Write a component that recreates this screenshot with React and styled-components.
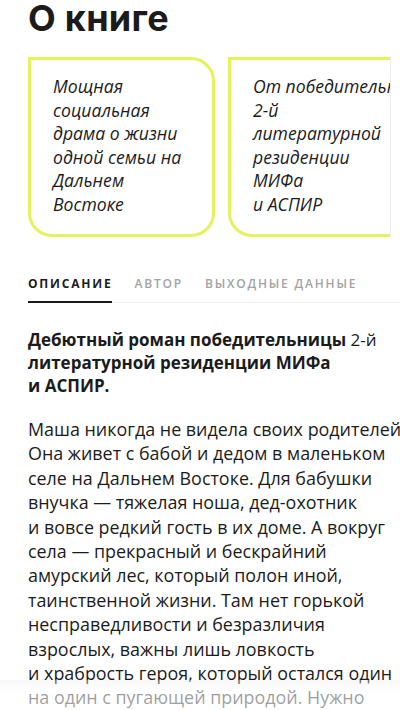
import React from "react";
import styled, { createGlobalStyle } from "styled-components";

const GlobalStyle = createGlobalStyle`
  html, body {
    margin: 0;
    padding: 0;
    background: #fff;
    overflow: hidden;
  }
  body {
    font-family: "Open Sans", "Noto Sans", sans-serif;
    color: #1b1b1b;
  }
`;

const cards = [
  ["Мощная", "социальная", "драма о жизни", "одной семьи на", "Дальнем", "Востоке"],
  ["От победительницы", "2-й", "литературной", "резиденции", "МИФа", "и АСПИР"],
];

const tabs = ["Описание", "Автор", "Выходные данные"];

const bodyLines = [
  "Маша никогда не видела своих родителей.",
  "Она живет с бабой и дедом в маленьком",
  "селе на Дальнем Востоке. Для бабушки",
  "внучка — тяжелая ноша, дед-охотник",
  "и вовсе редкий гость в их доме. А вокруг",
  "села — прекрасный и бескрайний",
  "амурский лес, который полон иной,",
  "таинственной жизни. Там нет горькой",
  "несправедливости и безразличия",
  "взрослых, важны лишь ловкость",
  "и храбрость героя, который остался один",
  "на один с пугающей природой. Нужно",
];

const Page = styled.div`
  position: relative;
  width: 400px;
  height: 710px;
  overflow: hidden;
  padding: 1px 0 0 28px;
  box-sizing: border-box;
`;

const Title = styled.h1`
  margin: -5px 0 0;
  font-family: "Inter", sans-serif;
  font-size: 36px;
  font-weight: 700;
  line-height: 44px;
  letter-spacing: 0.3px;
`;

const CardRow = styled.div`
  display: flex;
  gap: 13px;
  width: 362px;
  margin-top: 17px;
  overflow: hidden;
  border-right: 1px solid #ececec;
`;

const Card = styled.div`
  flex: 0 0 187px;
  height: 180px;
  box-sizing: border-box;
  border: 3px solid #e3f35c;
  border-radius: 0 24px 24px 24px;
  padding: 15px 0 0 22px;
  font-family: "Open Sans", sans-serif;
  font-style: italic;
  font-size: 17.6px;
  line-height: 23.5px;
  white-space: nowrap;
  overflow: hidden;
`;

const Line = styled.div``;

const TabBar = styled.div`
  display: flex;
  gap: 22px;
  margin-top: 38px;
  border-bottom: 1px solid #ececec;
`;

const Tab = styled.div`
  font-family: "Open Sans", sans-serif;
  font-size: 12px;
  font-weight: ${({ $active }) => ($active ? 700 : 600)};
  letter-spacing: 1.8px;
  text-transform: uppercase;
  color: ${({ $active }) => ($active ? "#1b1b1b" : "#a3a3a3")};
  padding: 0 0 9px;
  border-bottom: 2px solid ${({ $active }) => ($active ? "#1b1b1b" : "transparent")};
  margin-bottom: -1px;
  white-space: nowrap;
`;

const Lead = styled.p`
  margin: 25px 0 0;
  font-size: 17px;
  line-height: 23px;
  font-weight: 700;
  white-space: nowrap;
`;

const Regular = styled.span`
  font-weight: 400;
`;

const Body = styled.p`
  margin: 20px 0 0;
  font-size: 17.9px;
  line-height: 24.4px;
  white-space: nowrap;
`;

const Fade = styled.div`
  position: absolute;
  left: 0;
  right: 0;
  bottom: 0;
  height: 30px;
  background: linear-gradient(
    to bottom,
    rgba(235, 235, 235, 0.35),
    rgba(255, 255, 255, 0.55) 40%,
    rgba(255, 255, 255, 0.6)
  );
`;

export default function App() {
  return (
    <>
      <GlobalStyle />
      <Page>
        <Title>О книге</Title>
        <CardRow>
          {cards.map((lines, i) => (
            <Card key={i}>
              {lines.map((l) => (
                <Line key={l}>{l}</Line>
              ))}
            </Card>
          ))}
        </CardRow>
        <TabBar>
          {tabs.map((t, i) => (
            <Tab key={t} $active={i === 0}>
              {t}
            </Tab>
          ))}
        </TabBar>
        <Lead>
          Дебютный роман победительницы <Regular>2-й</Regular>
          <br />
          литературной резиденции МИФа
          <br />и АСПИР.
        </Lead>
        <Body>
          {bodyLines.map((l) => (
            <Line key={l}>{l}</Line>
          ))}
        </Body>
        <Fade />
      </Page>
    </>
  );
}
